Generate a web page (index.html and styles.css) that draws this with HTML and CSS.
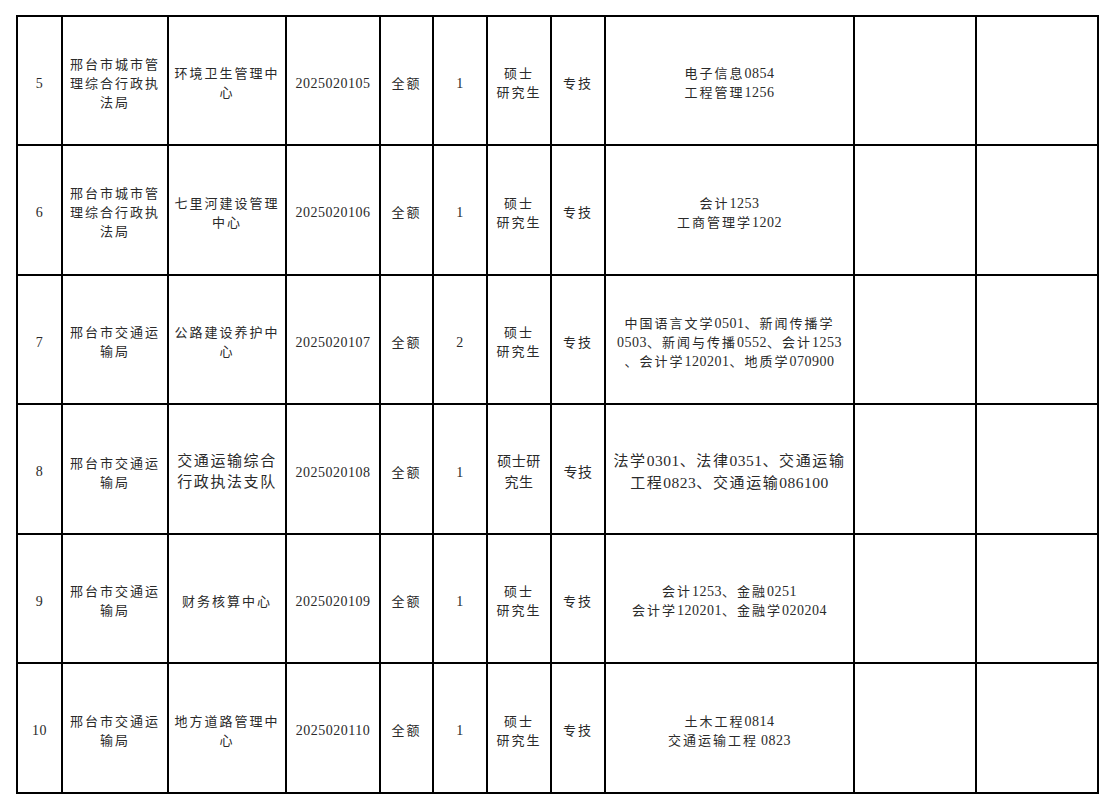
FILE: index.html
```html
<!DOCTYPE html>
<html lang="zh-CN">
<head>
<meta charset="utf-8">
<title>岗位表</title>
<link rel="stylesheet" href="styles.css">
</head>
<body>
<table class="grid">
  <colgroup>
    <col class="w1"><col class="w2"><col class="w3"><col class="w4"><col class="w5"><col class="w6"><col class="w7"><col class="w8"><col class="w9"><col class="w10"><col class="w11">
  </colgroup>
  <tbody>
    <tr class="ra">
      <td><span class="n">5</span></td>
      <td>邢台市城市管<br>理综合行政执<br>法局</td>
      <td>环境卫生管理中<br>心</td>
      <td><span class="n">2025020105</span></td>
      <td>全额</td>
      <td><span class="n">1</span></td>
      <td>硕士<br>研究生</td>
      <td>专技</td>
      <td>电子信息<span class="n">0854</span><br>工程管理<span class="n">1256</span></td>
      <td></td>
      <td></td>
    </tr>
    <tr class="rb">
      <td><span class="n">6</span></td>
      <td>邢台市城市管<br>理综合行政执<br>法局</td>
      <td>七里河建设管理<br>中心</td>
      <td><span class="n">2025020106</span></td>
      <td>全额</td>
      <td><span class="n">1</span></td>
      <td>硕士<br>研究生</td>
      <td>专技</td>
      <td>会计<span class="n">1253</span><br>工商管理学<span class="n">1202</span></td>
      <td></td>
      <td></td>
    </tr>
    <tr class="ra">
      <td><span class="n">7</span></td>
      <td>邢台市交通运<br>输局</td>
      <td>公路建设养护中<br>心</td>
      <td><span class="n">2025020107</span></td>
      <td>全额</td>
      <td><span class="n">2</span></td>
      <td>硕士<br>研究生</td>
      <td>专技</td>
      <td>中国语言文学<span class="n">0501</span>、新闻传播学<br><span class="n">0503</span>、新闻与传播<span class="n">0552</span>、会计<span class="n">1253</span><br>、会计学<span class="n">120201</span>、地质学<span class="n">070900</span></td>
      <td></td>
      <td></td>
    </tr>
    <tr class="rb big">
      <td><span class="n">8</span></td>
      <td class="std">邢台市交通运<br>输局</td>
      <td class="lg">交通运输综合<br>行政执法支队</td>
      <td class="std"><span class="n">2025020108</span></td>
      <td class="std">全额</td>
      <td class="std"><span class="n">1</span></td>
      <td class="md">硕士研<br>究生</td>
      <td class="md">专技</td>
      <td class="lg">法学<span class="n">0301</span>、法律<span class="n">0351</span>、交通运输<br>工程<span class="n">0823</span>、交通运输<span class="n">086100</span></td>
      <td></td>
      <td></td>
    </tr>
    <tr class="ra">
      <td><span class="n">9</span></td>
      <td>邢台市交通运<br>输局</td>
      <td>财务核算中心</td>
      <td><span class="n">2025020109</span></td>
      <td>全额</td>
      <td><span class="n">1</span></td>
      <td>硕士<br>研究生</td>
      <td>专技</td>
      <td>会计<span class="n">1253</span>、金融<span class="n">0251</span><br>会计学<span class="n">120201</span>、金融学<span class="n">020204</span></td>
      <td></td>
      <td></td>
    </tr>
    <tr class="rb">
      <td><span class="n">10</span></td>
      <td>邢台市交通运<br>输局</td>
      <td>地方道路管理中<br>心</td>
      <td><span class="n">2025020110</span></td>
      <td>全额</td>
      <td><span class="n">1</span></td>
      <td>硕士<br>研究生</td>
      <td>专技</td>
      <td>土木工程<span class="n">0814</span><br>交通运输工程<span class="n sp">0823</span></td>
      <td></td>
      <td></td>
    </tr>
  </tbody>
</table>
</body>
</html>
```
FILE: styles.css
```css
html, body {
  margin: 0;
  padding: 0;
  background: #ffffff;
}

.grid {
  margin: 15px 0 0 16px;
  width: 1083px;
  table-layout: fixed;
  border-collapse: separate;
  border-spacing: 2px;
  background: #000000;
  font-family: "Liberation Serif", "Noto Sans CJK SC", serif;
  font-size: 13px;
  line-height: 19px;
  letter-spacing: 2px;
  color: #2a2a2a;
}

.w1 { width: 43px; }
.w2 { width: 104px; }
.w3 { width: 116px; }
.w4 { width: 92px; }
.w5 { width: 51px; }
.w6 { width: 52px; }
.w7 { width: 62px; }
.w8 { width: 52px; }
.w9 { width: 247px; }
.w10 { width: 120px; }
.w11 { width: 120px; }

.grid td {
  background: #ffffff;
  padding: 5px 0 0 0;
  text-align: center;
  vertical-align: middle;
  white-space: nowrap;
  overflow: hidden;
}

.ra { height: 127px; }
.rb { height: 128px; }

.n {
  font-size: 14px;
  letter-spacing: 0.5px;
}

.sp {
  margin-left: 3px;
}

.big td.lg {
  font-size: 15px;
  line-height: 21px;
  letter-spacing: 1.6px;
  padding-top: 6px;
}

.big td.lg .n {
  font-size: 15.5px;
  letter-spacing: 0.5px;
}

.big td.md {
  font-size: 14px;
  line-height: 21px;
  letter-spacing: 0.5px;
  padding-top: 6px;
}

.big td.std {
  padding-top: 7px;
}
```
